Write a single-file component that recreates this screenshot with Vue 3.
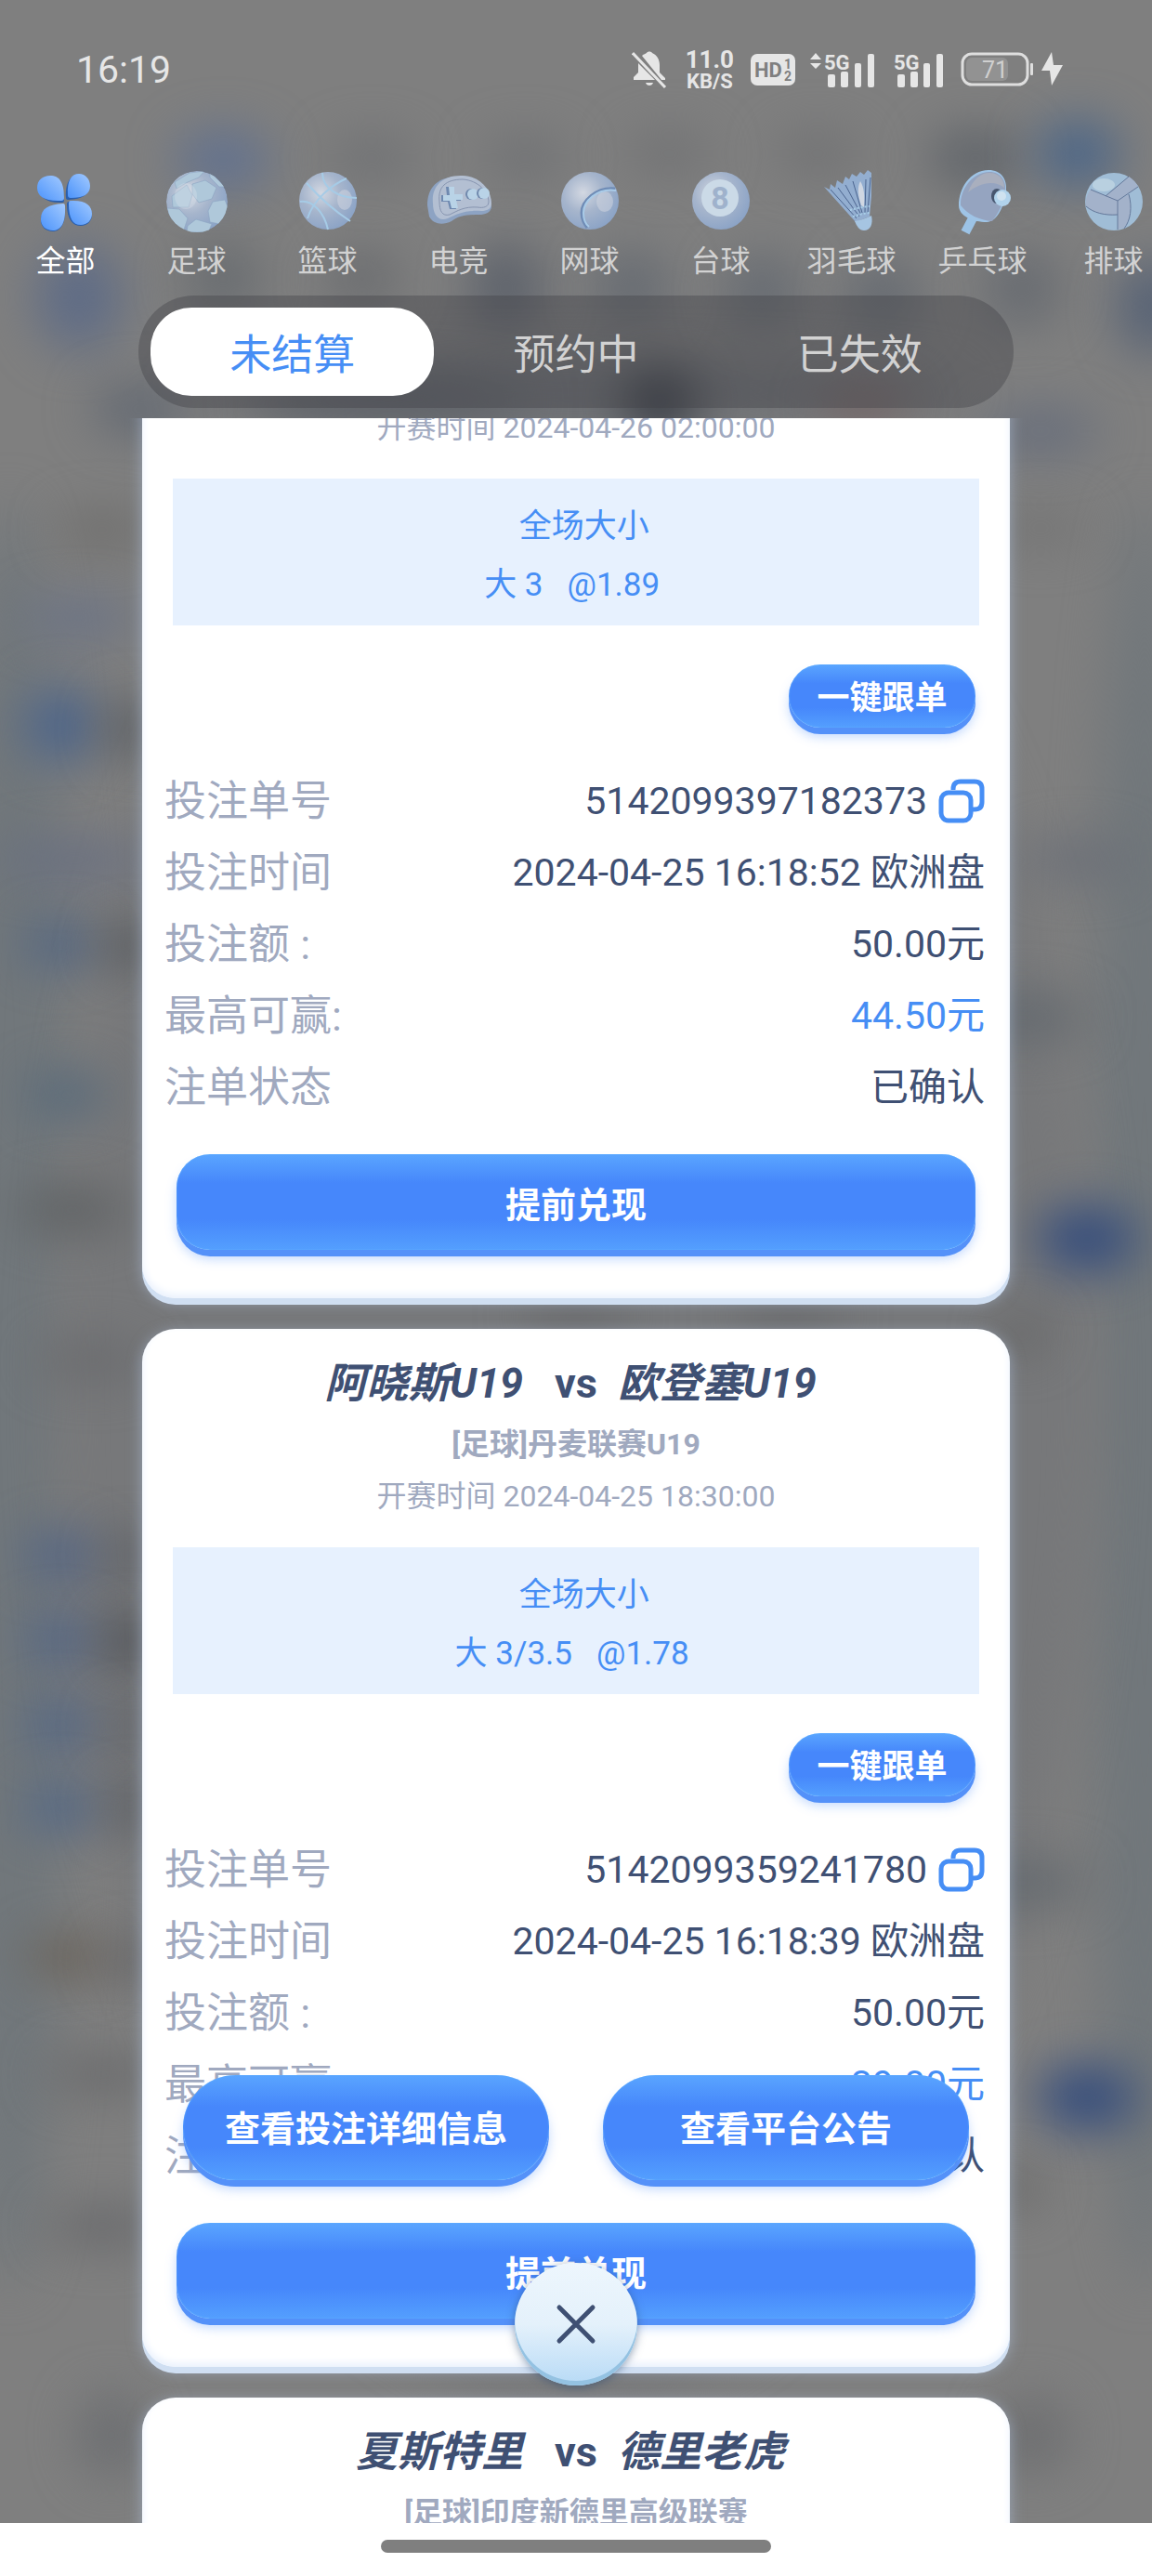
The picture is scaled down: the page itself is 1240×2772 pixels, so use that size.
<script setup>
import { ref } from 'vue'

const sports = [
  { id: 'all', name: '全部' },
  { id: 'football', name: '足球' },
  { id: 'basketball', name: '篮球' },
  { id: 'esports', name: '电竞' },
  { id: 'tennis', name: '网球' },
  { id: 'billiards', name: '台球' },
  { id: 'badminton', name: '羽毛球' },
  { id: 'pingpong', name: '乒乓球' },
  { id: 'volleyball', name: '排球' },
]
const sport = ref('all')

const tabs = ['未结算', '预约中', '已失效']
const tab = ref('未结算')

const bets = [
  {
    id: '5142099397182373',
    start: '2024-04-26 02:00:00',
    market: '全场大小',
    pick: '大 3',
    odds: '@1.89',
    time: '2024-04-25 16:18:52',
    amount: '50.00元',
    win: '44.50元',
  },
  {
    id: '5142099359241780',
    home: '阿晓斯U19',
    away: '欧登塞U19',
    league: '[足球]丹麦联赛U19',
    start: '2024-04-25 18:30:00',
    market: '全场大小',
    pick: '大 3/3.5',
    odds: '@1.78',
    time: '2024-04-25 16:18:39',
    amount: '50.00元',
    win: '39.00元',
  },
  {
    id: '3',
    home: '夏斯特里',
    away: '德里老虎',
    league: '[足球]印度新德里高级联赛',
  },
]

const copy = (id) => {
  navigator.clipboard?.writeText(id)
}

// manchas del fondo: x, y, radio x, radio y, color
const blobs = [
  [10, 1500, 70, 960, '#71777b'],
  [1232, 1500, 60, 960, '#71777b'],
  [620, 1500, 560, 1080, '#77787a'],
  [240, 172, 50, 30, '#5f7090'],
  [400, 170, 45, 20, '#6d6f72'],
  [565, 170, 45, 20, '#6d6f72'],
  [720, 165, 45, 20, '#6f7072'],
  [880, 165, 45, 20, '#6f7072'],
  [1050, 170, 50, 28, '#5d6268'],
  [1160, 165, 44, 34, '#486488'],
  [85, 320, 46, 56, '#5f6c86'],
  [240, 300, 40, 40, '#686c70'],
  [390, 300, 40, 30, '#696b6e'],
  [545, 310, 40, 50, '#5d626b'],
  [680, 310, 40, 40, '#656a71'],
  [820, 315, 40, 40, '#656a71'],
  [950, 320, 40, 40, '#656a71'],
  [1100, 310, 40, 40, '#666a70'],
  [1240, 330, 34, 50, '#525f74'],
  [620, 420, 420, 30, '#6a6d72'],
  [710, 432, 40, 34, '#363a42'],
  [930, 436, 50, 16, '#75605f'],
  [150, 440, 50, 24, '#5e6570'],
  [420, 430, 150, 24, '#5b5f66'],
  [1120, 464, 60, 20, '#626a7b'],
  [110, 570, 50, 16, '#6a6967'],
  [1120, 568, 50, 14, '#707070'],
  [85, 665, 60, 18, '#657088'],
  [66, 780, 40, 40, '#4b648a'],
  [140, 785, 24, 32, '#56595d'],
  [80, 925, 80, 18, '#656d82'],
  [66, 1016, 42, 20, '#4a6183'],
  [140, 1018, 28, 20, '#4e5053'],
  [72, 1178, 44, 20, '#50667a'],
  [78, 1302, 60, 22, '#5c5f61'],
  [100, 1464, 60, 18, '#67686b'],
  [66, 1674, 42, 22, '#4c6186'],
  [140, 1674, 24, 18, '#54565a'],
  [66, 1764, 42, 22, '#4c6287'],
  [140, 1766, 28, 22, '#424448'],
  [66, 1856, 42, 22, '#4c6387'],
  [140, 1858, 24, 18, '#585a5e'],
  [66, 1945, 42, 22, '#4c6488'],
  [140, 1944, 24, 20, '#525458'],
  [72, 2106, 44, 18, '#665c50'],
  [140, 2110, 28, 18, '#5e5e60'],
  [110, 2232, 60, 18, '#656668'],
  [110, 2396, 60, 18, '#646568'],
  [120, 2620, 34, 44, '#6b6d70'],
  [1160, 925, 60, 18, '#676c76'],
  [1100, 1095, 70, 22, '#61676d'],
  [1170, 1333, 54, 34, '#324b7c'],
  [1100, 1435, 26, 18, '#5f5f5f'],
  [1100, 2026, 70, 22, '#61676d'],
  [1170, 2257, 54, 34, '#324b7c'],
  [1095, 2355, 24, 18, '#606060'],
  [1110, 2620, 40, 40, '#6d6e70'],
  [620, 1416, 60, 14, '#636466'],
  [850, 1416, 60, 14, '#636466'],
]
</script>

<template>
  <div class="screen">
    <svg class="backdrop" viewBox="0 0 1240 2772" preserveAspectRatio="none" aria-hidden="true">
      <ellipse
        v-for="(b, index) in blobs"
        :key="index"
        :cx="b[0]"
        :cy="b[1]"
        :rx="b[2]"
        :ry="b[3]"
        :fill="b[4]"
      />
    </svg>

    <!-- barra de estado -->
    <header class="status">
      <span class="clock">16:19</span>
      <div class="status-icons">
        <svg width="38" height="40" viewBox="0 0 38 40">
          <path
            fill="#e6e6e6"
            d="M11 5C13 3 15 3 16 2C17 0 21 0 22 2C27 4 30 9 30 15V23L36 29V31H32ZM7 13L25 31H2V28L7 23ZM15 34H23C22 38 16 38 15 34Z"
          />
          <path stroke="#e6e6e6" stroke-width="3" d="M1 2L36 39" />
        </svg>
        <span class="speed"><b>11.0</b><b class="unit">KB/S</b></span>
        <svg class="hd" width="48" height="34" viewBox="0 0 48 34">
          <rect width="48" height="34" rx="7" fill="#e6e6e6" />
          <text x="4" y="25" font-size="22" font-weight="700">HD</text>
          <text x="36" y="16" font-size="14" font-weight="700">1</text>
          <text x="36" y="29" font-size="14" font-weight="700">2</text>
        </svg>
        <svg width="70" height="40" viewBox="0 0 70 40" fill="#e6e6e6">
          <path d="M0 9L6 2L12 9ZM0 13H12L6 19Z" />
          <text x="15" y="20" font-size="22" font-weight="700">5G</text>
          <rect x="19" y="25" width="8" height="14" rx="2" />
          <rect x="33" y="22" width="8" height="17" rx="2" />
          <rect x="48" y="13" width="7" height="26" rx="2" />
          <rect x="62" y="3" width="7" height="36" rx="2" />
        </svg>
        <svg class="sim" width="54" height="40" viewBox="0 0 54 40" fill="#e6e6e6">
          <text x="0" y="20" font-size="22" font-weight="700">5G</text>
          <rect x="4" y="25" width="8" height="14" rx="2" />
          <rect x="18" y="22" width="8" height="17" rx="2" />
          <rect x="32" y="13" width="7" height="26" rx="2" />
          <rect x="46" y="3" width="7" height="36" rx="2" />
        </svg>
        <svg class="battery" width="112" height="38" viewBox="0 0 112 38">
          <rect x="2" y="2" width="70" height="33" rx="10" fill="none" stroke="#dedede" stroke-width="3" />
          <rect x="6" y="6" width="45" height="25" rx="6" fill="#929292" />
          <rect x="75" y="12" width="3" height="13" rx="1" fill="#dedede" />
          <text x="23" y="28" font-size="25" fill="#d0d0d0">71</text>
          <path fill="#e6e6e6" d="M98 0L87 20H96L98 36L110 14H100Z" />
        </svg>
      </div>
    </header>

    <!-- deportes -->
    <nav class="sports">
      <button
        v-for="s in sports"
        :key="s.id"
        class="sport"
        :class="{ active: sport === s.id }"
        @click="sport = s.id"
      >
        <svg width="72" height="72" viewBox="0 0 72 72" aria-hidden="true">
          <defs>
            <radialGradient :id="'ball-' + s.id" cx=".38" cy=".36" r=".68">
              <stop offset="0" stop-color="#d3d8e2" />
              <stop offset=".5" stop-color="#a6b5cc" />
              <stop offset="1" stop-color="#8ba3c6" />
            </radialGradient>
            <linearGradient :id="'petal-' + s.id" x1="1" y1="0" x2="0" y2="1">
              <stop offset="0" stop-color="#a3caff" />
              <stop offset="1" stop-color="#4b93fb" />
            </linearGradient>
          </defs>
          <g v-if="s.id === 'all'">
            <g fill="#2a5fae">
              <path d="M19 10C28 10 34 17 34 35Q34 37 32 37C16 38 7 31 7 23C7 15 12 10 19 10Z" />
              <path d="M49 7C56 7 61 12 61 20C61 29 53 33 39 34Q36 34 36 32C35 16 41 7 49 7Z" />
              <path d="M32 39Q35 39 35 42C36 60 30 68 22 68C14 68 9 63 9 56C9 45 17 40 32 39Z" />
              <path d="M39 36C56 35 64 42 64 50C64 57 59 62 52 62C43 62 37 55 37 39Q37 36 39 36Z" />
            </g>
            <g :fill="`url(#petal-${s.id})`">
              <path d="M19 8C29 8 34 15 34 32Q34 35 31 35C13 36 5 30 5 21C5 13 11 8 19 8Z" />
              <path d="M50 6C57 6 62 12 62 19C62 28 55 32 41 32Q38 32 38 29C37 13 42 6 50 6Z" />
              <path d="M33 38Q35 38 35 41C36 60 30 67 22 67C14 67 9 62 9 55C9 43 17 39 33 38Z" />
              <path d="M41 35C57 34 64 40 64 49C64 56 59 61 52 61C43 61 39 54 39 38Q39 35 41 35Z" />
            </g>
          </g>
          <g v-else-if="s.id === 'football'">
            <clipPath id="football-clip"><circle cx="36" cy="36" r="33" /></clipPath>
            <g clip-path="url(#football-clip)">
              <circle cx="36" cy="36" r="33" :fill="`url(#ball-${s.id})`" />
              <path
                fill="#afc8da"
                stroke="#8ba4c2"
                stroke-width=".6"
                d="M31 17L45 13L57 21L52 33L38 37L31 28ZM25 18L31 29L27 42H10L9 30ZM4 43L17 44L26 54L22 66H10ZM35 55L52 60L48 69H25L26 62ZM53 36L66 34L71 46L61 60L50 58L48 46ZM28 5L44 3L38 10L26 15L14 22L12 15ZM50 4L66 20L60 20L50 10Z"
              />
              <ellipse cx="24" cy="30" rx="12" ry="14" fill="#dbe3ea" opacity=".35" />
            </g>
          </g>
          <g v-else-if="s.id === 'basketball'">
            <circle cx="36" cy="35" r="31" :fill="`url(#ball-${s.id})`" />
            <ellipse cx="54" cy="34" rx="8" ry="11" fill="#d3d8e2" opacity=".5" />
            <g fill="none" stroke="#a6cbe6" stroke-width="2">
              <path d="M13 16C22 26 40 44 60 57M56 11C40 18 20 34 14 54M30 5C30 22 48 32 67 32M6 36C20 34 32 48 36 66" />
            </g>
          </g>
          <g v-else-if="s.id === 'esports'">
            <path fill="#8da3c3" d="M2 40C2 20 14 8 38 9C60 10 71 26 71 42C70 48 64 50 58 50C44 50 36 51 28 57C18 62 8 60 4 52Z" />
            <path fill="#b3bfd2" d="M8 38C6 20 18 7 40 8C60 9 71 24 71 38C71 44 66 46 60 46C42 45 34 49 24 54C14 58 8 50 8 38Z" />
            <path fill="none" stroke="#8795b0" stroke-width="1" d="M15 36C13 20 22 12 40 12C57 13 68 26 68 36C68 42 62 43 56 42C42 41 34 46 26 50C18 52 15 46 15 36Z" />
            <path fill="#6f89b0" d="M22 20H29V28H38V35H31L33 44H26L24 36H17V29H23Z" />
            <path fill="#b9d3e7" d="M25 20H31V28H40V34H33L35 43H28L26 35H19V29H26Z" />
            <circle cx="49" cy="28" r="6" fill="#7089ad" />
            <circle cx="51" cy="28" r="6" fill="#b9d3e7" />
            <circle cx="61" cy="27" r="6" fill="#7089ad" />
            <circle cx="63" cy="27" r="6" fill="#b9d3e7" />
          </g>
          <g v-else-if="s.id === 'tennis'">
            <circle cx="36" cy="35" r="31" :fill="`url(#ball-${s.id})`" />
            <ellipse cx="52" cy="36" rx="9" ry="11" fill="#d3d8e2" opacity=".5" />
            <path fill="none" stroke="#6f8cb6" stroke-width="3" d="M63 22C42 20 27 36 27 48C27 56 30 60 33 64" />
            <path fill="none" stroke="#a9cbe8" stroke-width="2" d="M64 24C43 21 29 36 29 48C29 56 31 60 35 63" />
          </g>
          <g v-else-if="s.id === 'billiards'">
            <circle cx="36" cy="35" r="31" :fill="`url(#ball-${s.id})`" />
            <circle cx="35" cy="32" r="20" fill="#cbdae7" />
            <text x="35" y="44" font-size="34" font-weight="700" text-anchor="middle" fill="#9fb2cc">8</text>
          </g>
          <g v-else-if="s.id === 'badminton'">
            <path fill="#93aed0" d="M6 20L12 23L13 17L18 21L20 13L26 17L29 9L33 12L36 6L41 9L45 4L49 7L53 2L57 5V30L55 52L40 58Z" />
            <path fill="#d0d7e2" d="M45 14C49 20 50 30 49 42L46 40C42 28 42 20 45 14Z" />
            <path fill="none" stroke="#4c658f" stroke-width="1" d="M13 23L41 54M21 21L44 52M29 18L46 50M37 14L47 48M51 12L50 48M56 10L53 48" />
            <path fill="none" stroke="#a9cfe8" stroke-width="2" stroke-dasharray="2 2" d="M34 45Q44 42 55 41M37 52Q46 49 55 48" />
            <path fill="#a6c5e2" d="M39 57Q47 56 57 51C59 60 56 67 49 67C44 67 41 62 39 57Z" />
          </g>
          <g v-else-if="s.id === 'pingpong'">
            <path stroke="#9cc3e6" stroke-width="10" d="M26 52L17 69" />
            <path fill="#9fc4e6" d="M10 40C10 22 22 2 42 2C56 2 62 12 61 24C60 38 52 58 40 58C26 58 10 52 10 40Z" />
            <path fill="#95a4c0" d="M12 40C11 24 24 4 43 4C56 4 61 14 60 25C59 36 53 48 46 57C32 56 20 50 12 40Z" />
            <path fill="#a9afbe" d="M20 26C25 12 34 5 43 5C54 5 59 13 59 21C48 12 32 16 20 26Z" />
            <ellipse cx="51" cy="30" rx="6" ry="8" fill="#47566f" />
            <circle cx="57" cy="32" r="9" fill="#b1d3ec" />
            <circle cx="56" cy="30" r="5" fill="#cfe2f0" />
          </g>
          <g v-else>
            <circle cx="36" cy="36" r="31" fill="#a0bdd6" />
            <path fill="#a3b2ca" d="M27 30L52 9C57 12 60 16 62 20L40 35ZM11 23L40 35V50C26 51 14 48 6 41C5 34 7 28 11 23ZM40 35L52 28C56 42 54 56 47 64L40 66Z" />
            <ellipse cx="25" cy="18" rx="12" ry="7" fill="#c3d8e4" opacity=".7" />
            <path fill="none" stroke="#64789a" stroke-width="1" d="M11 23L40 35V66M40 35L62 20M27 30L52 9M6 41C14 48 26 51 40 50M52 28C56 42 54 56 47 65" />
          </g>
        </svg>
        <span>{{ s.name }}</span>
      </button>
    </nav>

    <div class="tabs">
      <button v-for="t in tabs" :key="t" class="tab" :class="{ active: tab === t }" @click="tab = t">
        {{ t }}
      </button>
    </div>

    <!-- lista de apuestas -->
    <main class="list">
      <article v-for="bet in bets" :key="bet.id" class="card">
        <h2 v-if="bet.home" class="teams">
          <em class="home">{{ bet.home }}</em>
          <span>vs</span>
          <em class="away">{{ bet.away }}</em>
        </h2>
        <p v-if="bet.league" class="league">{{ bet.league }}</p>
        <template v-if="bet.start">
          <p class="start">开赛时间 {{ bet.start }}</p>
          <div class="market">
            <p>{{ '\u00a0\u00a0' + bet.market }}</p>
            <p>{{ bet.pick + '\u00a0\u00a0\u00a0' + bet.odds + '\u00a0' }}</p>
          </div>
          <button class="blue follow">一键跟单</button>
          <dl class="rows">
            <div class="row">
              <dt>投注单号</dt>
              <dd>
                {{ bet.id }}
                <button class="copy" aria-label="复制" @click="copy(bet.id)">
                  <svg width="50" height="48" viewBox="0 0 50 48" fill="none" stroke="#468ef5" stroke-width="5">
                    <path d="M16 12V11Q16 3 24 3H39Q47 3 47 11V25Q47 33 39 33H36" />
                    <rect x="3" y="15" width="32" height="30" rx="8" />
                  </svg>
                </button>
              </dd>
            </div>
            <div class="row">
              <dt>投注时间</dt>
              <dd>{{ bet.time }} 欧洲盘</dd>
            </div>
            <div class="row">
              <dt>投注额 :</dt>
              <dd>{{ bet.amount }}</dd>
            </div>
            <div class="row">
              <dt>最高可赢:</dt>
              <dd class="win">{{ bet.win }}</dd>
            </div>
            <div class="row">
              <dt>注单状态</dt>
              <dd>已确认</dd>
            </div>
          </dl>
          <button class="blue cashout">提前兑现</button>
        </template>
      </article>
    </main>

    <div class="floating">
      <div class="actions">
        <button class="blue action">查看投注详细信息</button>
        <button class="blue action">查看平台公告</button>
      </div>
      <button class="close" aria-label="关闭">
        <svg width="44" height="44" viewBox="0 0 44 44" stroke="#3f5073" stroke-width="5" stroke-linecap="round">
          <path d="M4 4L40 40M40 4L4 40" />
        </svg>
      </button>
    </div>

    <footer class="home-bar"><span></span></footer>
  </div>
</template>

<style>
body {
  margin: 0;
}
</style>

<style scoped>
.screen {
  position: relative;
  display: flex;
  flex-direction: column;
  height: 100vh;
  overflow: hidden;
  background: #7f7f7f;
  color: #3f5073;
  font-family: Roboto, "Noto Sans CJK SC", sans-serif;
}
button {
  border: 0;
  padding: 0;
  background: none;
  color: inherit;
  font-family: inherit;
  cursor: pointer;
}
p, h2, dl, dd {
  margin: 0;
}
.backdrop {
  position: absolute;
  inset: 0;
  width: 100%;
  height: 100%;
}
.backdrop ellipse {
  filter: blur(26px);
}

.status {
  position: relative;
  display: flex;
  align-items: center;
  justify-content: space-between;
  height: 150px;
  padding: 0 94px 0 82px;
  color: #e6e6e6;
}
.clock {
  font-size: 41px;
}
.status-icons {
  display: flex;
  align-items: center;
}
.speed {
  display: flex;
  flex-direction: column;
  align-items: center;
  margin: 0 18px 0 20px;
  font-size: 26px;
  line-height: 26px;
}
.speed .unit {
  font-size: 22px;
  line-height: 22px;
}
.hd {
  margin-right: 16px;
  fill: #7f7f7f;
}
.sim {
  margin: 0 18px 0 20px;
}

.sports {
  position: relative;
  display: flex;
  height: 168px;
  overflow: hidden;
}
.sport {
  display: flex;
  flex: none;
  flex-direction: column;
  align-items: center;
  width: 141px;
  padding-top: 31px;
  color: #d2d2d2;
  font-size: 32px;
  line-height: 56px;
}
.sport.active {
  color: #fff;
}

.tabs {
  position: relative;
  display: flex;
  margin: 0 149px 11px;
  padding: 13px;
  border-radius: 60px;
  background: rgba(64, 64, 68, 0.38);
}
.tab {
  flex: 1;
  height: 95px;
  border-radius: 44px;
  color: #d2d2d2;
  font-size: 45px;
}
.tab.active {
  background: #fff;
  color: #468ef5;
}

.list {
  position: relative;
  flex: 1;
  min-height: 0;
  overflow: hidden;
  padding: 0 153px;
}
.card {
  margin-bottom: 33px;
  padding: 29px 27px 45px;
  border-radius: 36px;
  background: #fff;
  box-shadow: inset 0 -4px 8px #e9f1fd, 0 7px 0 #d0dff2, 0 4px 16px rgba(190, 212, 245, 0.5);
}
.card:first-child {
  margin-top: -47px;
}
.teams {
  display: grid;
  grid-template-columns: 1fr auto 1fr;
  font-size: 45px;
  font-weight: 700;
  line-height: 60px;
}
.home {
  padding-right: 34px;
  text-align: right;
}
.away {
  padding-left: 22px;
}
.league {
  margin-top: 7px;
  color: #a0a9bf;
  font-size: 32px;
  font-weight: 700;
  line-height: 56px;
  text-align: center;
}
.start {
  color: #a0a9bf;
  font-size: 32px;
  line-height: 56px;
  text-align: center;
}
.market {
  margin: 27px 6px 42px;
  padding: 20px 0 12px;
  background: #e7f1fe;
  color: #468ef5;
  font-size: 35px;
  line-height: 63px;
  text-align: center;
}

.blue {
  background: linear-gradient(#5aa5ff, #4687fb 30%, #4687fb 68%, #549ffe);
  box-shadow: inset 0 0 2px #62b4ff, 0 7px 0 #5491f9, 0 10px 12px rgba(84, 145, 249, 0.35);
  color: #fff;
  font-weight: 700;
}
.follow {
  display: block;
  width: 201px;
  height: 68px;
  margin: 0 10px 42px auto;
  padding-bottom: 3px;
  border-radius: 40px;
  font-size: 35px;
}
.rows {
  margin-left: -3px;
}
.row {
  display: flex;
  justify-content: space-between;
  height: 77px;
}
dt {
  color: #a0a9bf;
  font-size: 45px;
  line-height: 76px;
}
dd {
  display: flex;
  align-items: center;
  height: 74px;
  font-size: 41px;
  line-height: 74px;
}
.win {
  color: #468ef5;
}
.copy {
  height: 48px;
  margin-left: 12px;
  line-height: 0;
}
.cashout {
  display: block;
  width: calc(100% - 20px);
  height: 103px;
  margin: 32px 10px 7px;
  border-radius: 36px;
  font-size: 38px;
}

.floating {
  position: absolute;
  right: 0;
  bottom: 205px;
  left: 0;
  display: flex;
  flex-direction: column;
  align-items: center;
  gap: 89px;
}
.actions {
  display: flex;
  gap: 58px;
}
.action {
  width: 394px;
  height: 113px;
  padding-bottom: 4px;
  border-radius: 60px;
  font-size: 38px;
}
.close {
  display: grid;
  place-items: center;
  width: 132px;
  height: 132px;
  border-radius: 50%;
  background: linear-gradient(#edf6fd, #e4f1fb 50%, #b7daf6);
  box-shadow: inset 0 -5px 0 #94c2e2, 0 2px 10px rgba(40, 70, 110, 0.5);
}

.home-bar {
  position: relative;
  display: grid;
  place-items: center;
  height: 50px;
  padding-bottom: 7px;
  background: #fff;
}
.home-bar span {
  width: 420px;
  height: 14px;
  border-radius: 7px;
  background: #7f7f7f;
}
</style>
